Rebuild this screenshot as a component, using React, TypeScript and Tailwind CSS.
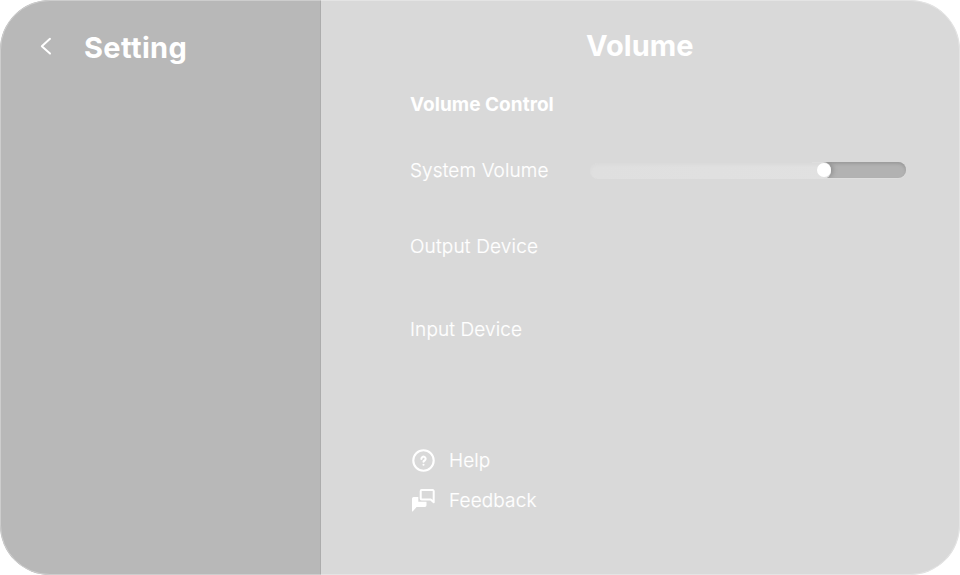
import React from 'react';

function HelpIcon() {
  return (
    <svg className="h-6 w-6 shrink-0" viewBox="0 0 24 24" fill="none" stroke="white" strokeWidth="2.1" strokeLinecap="round" strokeLinejoin="round">
      <circle cx="12.5" cy="11.5" r="10.2" />
      <path d="M10.4 9.9a2.1 2.1 0 1 1 3.3 1.6c-.8.5-1.2.8-1.2 1.3" />
      <path d="M12.5 15.7v.1" />
    </svg>
  );
}

function FeedbackIcon() {
  return (
    <svg className="h-6 w-6 shrink-0" viewBox="0 0 24 24" fill="none">
      <path d="M10.7 1.1H21.7a1 1 0 0 1 1 1V13.2l-3-2.8H10.7a1 1 0 0 1-1-1V2.1a1 1 0 0 1 1-1Z" stroke="white" strokeWidth="2" strokeLinejoin="round" />
      <path d="M2.6 8.1H7.3v4.7h8.2v3.5a1.6 1.6 0 0 1-1.6 1.6H5.6L1.9 22.3a.5.5 0 0 1-.9-.4V9.6A1.6 1.6 0 0 1 2.6 8.1Z" fill="white" />
    </svg>
  );
}

function VolumeSlider() {
  return (
    <div className="relative -top-px ml-auto h-4 w-[315px]">
      <div className="absolute right-0 top-0 h-4 w-[94px] rounded-r-full bg-[#b2b2b2] shadow-[inset_0_2px_3px_#9b9b9b,0_1px_1px_#dedede]" />
      <div className="absolute left-[221px] top-0 h-4 w-[19px] rounded-r-full bg-[#dedede] shadow-[2px_0_5px_#8c8c8c] [clip-path:inset(0_-10px_0_0)]" />
      <div className="absolute -left-px top-px h-4 w-[241px] rounded-full bg-linear-to-r from-[#dfdfdf] to-[#e1e1e1] shadow-[inset_0_2px_3px_#dadada]" />
      <div className="absolute left-[226px] top-[1px] h-3.5 w-3.5 rounded-full bg-white" />
    </div>
  );
}

export default function App() {
  return (
    <div className="h-[575px] w-[960px] overflow-hidden bg-white font-['Inter',sans-serif] text-white">
      <div className="relative flex h-full overflow-hidden rounded-[50px] bg-[#d9d9d9]">
        <aside className="flex w-[321px] items-start border-r border-[#acacac] bg-[#b8b8b8] pl-10 pt-[30px]">
          <svg className="mt-[7px] h-5 w-3" viewBox="0 0 12 20" fill="none" stroke="white" strokeWidth="2" strokeLinecap="round" strokeLinejoin="round">
            <path d="M10 1.8 1.8 9.2 10 16.6" />
          </svg>
          <h1 className="ml-8 text-[29px] font-bold leading-9 tracking-[0.35px]">Setting</h1>
        </aside>
        <main className="flex flex-1 flex-col pl-[89px] pr-[54px] pt-7">
          <h2 className="ml-44 text-[29px] font-bold leading-9 tracking-[0.05px]">Volume</h2>
          <h3 className="mt-[29px] text-[19px] font-bold leading-6 tracking-[0.03px]">Volume Control</h3>
          <div className="text-[19px] font-light leading-6 tracking-[0.12px] [-webkit-text-stroke:0.2px_white]">
            <div className="mt-[42px] flex h-6 items-center">
              <span>System Volume</span>
              <VolumeSlider />
            </div>
            <div className="mt-[52px] tracking-[0.18px]">Output Device</div>
            <div className="mt-[59px]">Input Device</div>
            <div className="mt-[107px] flex items-center gap-[14px] pl-px">
              <HelpIcon />
              <span>Help</span>
            </div>
            <div className="mt-4 flex items-center gap-[14px] pl-px">
              <FeedbackIcon />
              <span>Feedback</span>
            </div>
          </div>
        </main>
        <div className="pointer-events-none absolute inset-0 rounded-[50px] border border-white/30" />
      </div>
    </div>
  );
}
